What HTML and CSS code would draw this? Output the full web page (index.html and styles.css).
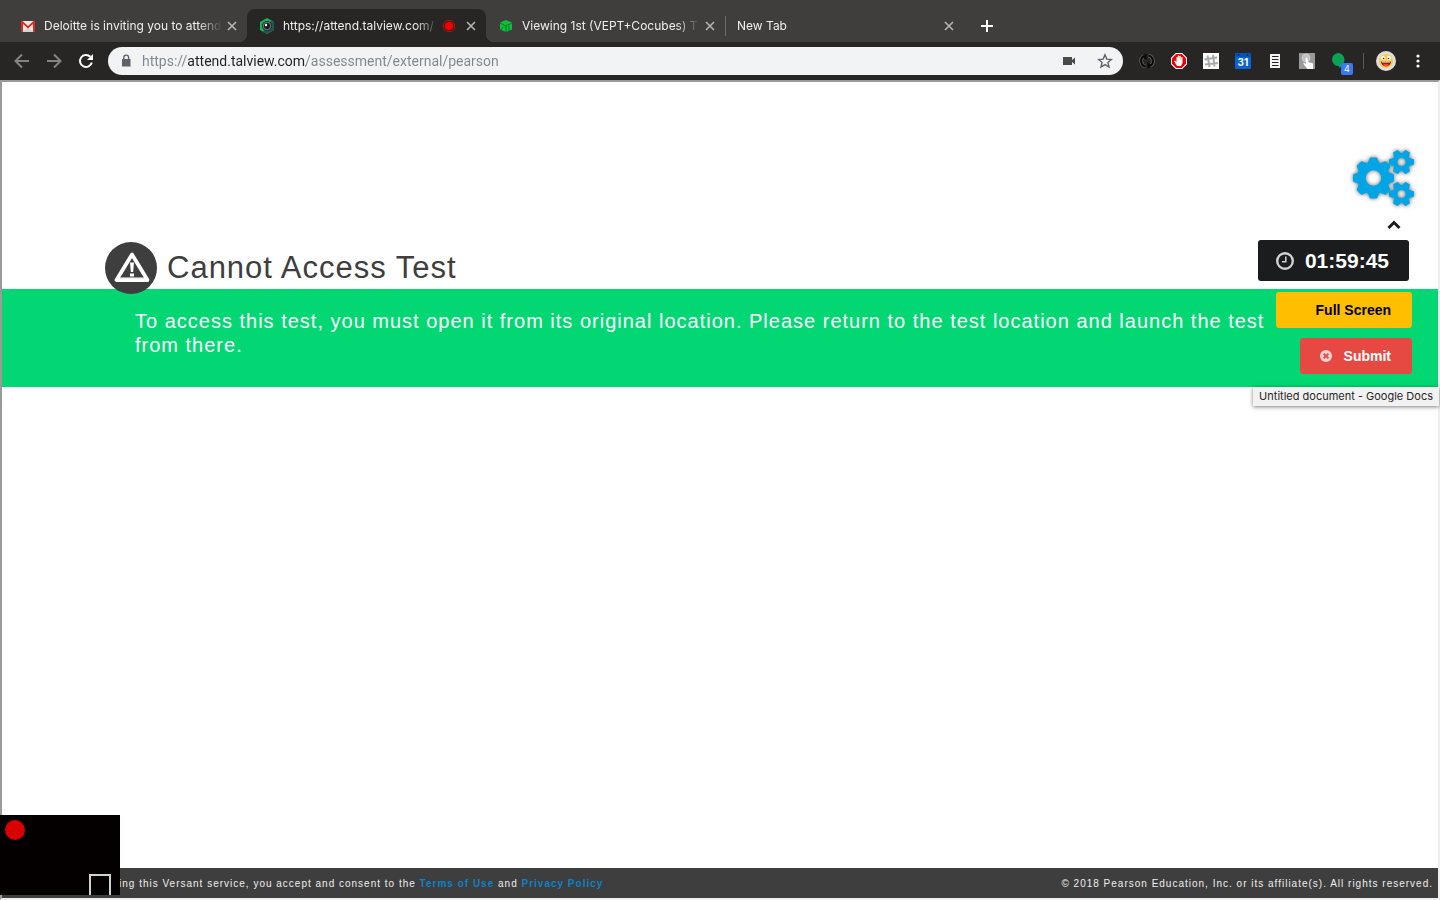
FILE: index.html
```html
<!DOCTYPE html>
<html lang="en">

<head>
    <meta charset="UTF-8">
    <meta name="viewport" content="width=device-width, initial-scale=1.0">
    <title>Cannot Access Test</title>
    <link rel="stylesheet" href="styles.css">
</head>

<body>
    <header class="browser">
        <!-- tabs -->
        <nav class="tabs">
            <div class="tab">
                <svg class="favicon" viewBox="0 0 16 16">
                    <path d="M1 3h14v11H1z" fill="#e8e8e8" />
                    <path d="M3 14l5-5 5 5z" fill="#d2d2d2" />
                    <path d="M1 14V3h1.500L8 8l5.500-5H15v11h-2V6l-5 4.500L3 6v8z" fill="#dd2c1e" />
                </svg>
                <span class="tab-title">Deloitte is inviting you to attend</span>
                <button class="close" aria-label="Close tab"><svg viewBox="0 0 16 16"><path d="M4 4l8 8M12 4l-8 8" /></svg></button>
            </div>
            <div class="tab active">
                <svg class="favicon" viewBox="0 0 16 16">
                    <path d="M8 0l7 4v8l-7 4-7-4V4z" fill="#16b45c" />
                    <path d="M15 4v8l-7 4-4-2 8-11z" fill="#235457" />
                    <circle cx="8" cy="8" r="5" fill="#16211f" />
                    <circle cx="8" cy="8" r="3.800" fill="none" stroke="#8b9a98" stroke-width=".8" />
                    <circle cx="7" cy="7" r="1.200" fill="#fff" />
                </svg>
                <span class="tab-title">https://attend.talview.com/</span>
                <svg class="recording" viewBox="0 0 16 16">
                    <circle cx="8" cy="8" r="5.700" fill="none" stroke="#e00" stroke-width=".8" />
                    <circle cx="8" cy="8" r="4.300" fill="#f00000" />
                </svg>
                <button class="close" aria-label="Close tab"><svg viewBox="0 0 16 16"><path d="M4 4l8 8M12 4l-8 8" /></svg></button>
            </div>
            <div class="tab">
                <svg class="favicon" viewBox="0 0 16 16">
                    <path d="M8 2l6 2.500v7L8 14l-6-2.500v-7z" fill="#0cc03c" />
                    <path d="M2 5l6 3v6M14 5L8 8M11 8.500v4M5 9l-2 3" fill="none" stroke="#0a6a28" stroke-width=".9" />
                </svg>
                <span class="tab-title">Viewing 1st (VEPT+Cocubes) T</span>
                <button class="close" aria-label="Close tab"><svg viewBox="0 0 16 16"><path d="M4 4l8 8M12 4l-8 8" /></svg></button>
            </div>
            <div class="tab divided">
                <span class="tab-title">New Tab</span>
                <button class="close" aria-label="Close tab"><svg viewBox="0 0 16 16"><path d="M4 4l8 8M12 4l-8 8" /></svg></button>
            </div>
            <button class="new-tab" aria-label="New tab"><svg viewBox="0 0 16 16"><path d="M8 2v12M2 8h12" /></svg></button>
        </nav>

        <!-- toolbar -->
        <div class="toolbar">
            <div class="nav-buttons">
                <button class="dim" aria-label="Back"><svg viewBox="0 0 16 16"><path d="M15 8H2M8 1.500L1.500 8 8 14.500" /></svg></button>
                <button class="dim" aria-label="Forward"><svg viewBox="0 0 16 16"><path d="M1 8h13M8 1.500L14.500 8 8 14.500" /></svg></button>
                <button aria-label="Reload"><svg viewBox="0 0 16 16"><path d="M13.800 9.500A6 6 0 1 1 12.300 3.800" /><path d="M15 1v6H9z" class="solid" /></svg></button>
            </div>
            <div class="omnibox">
                <svg class="lock" viewBox="0 0 16 16">
                    <path d="M4 6h8.500v7.500H4z" fill="#5f6368" />
                    <path d="M5.800 6.500V4.500a2.400 2.400 0 0 1 4.800 0v2" fill="none" stroke="#5f6368" stroke-width="1.400" />
                </svg>
                <input class="url" type="text" aria-label="Address" value="https://attend.talview.com/assessment/external/pearson">
                <button aria-label="Camera"><svg viewBox="0 0 16 16"><path d="M2 4h9v3l3-2.500v7L11 9v3H2z" fill="#4a4a4a" /></svg></button>
                <button aria-label="Bookmark"><svg viewBox="0 0 16 16"><path d="M8 1.800l1.800 4.300 4.600.4-3.500 3 1.100 4.600L8 11.600 4 14.100l1.100-4.600-3.500-3 4.600-.4z" fill="none" stroke="#5f6368" stroke-width="1.400" /></svg></button>
            </div>
            <div class="extensions">
                <svg viewBox="0 0 16 16">
                    <g fill="none" stroke="#6a6a6a" stroke-width="3.600"><path d="M6.500 13.500A5.700 5.700 0 0 1 5 3M9.500 2.500A5.700 5.700 0 0 1 11 13" /></g>
                    <g fill="none" stroke="#0a0a0a" stroke-width="2.200"><path d="M6.500 13.500A5.700 5.700 0 0 1 5 3M9.500 2.500A5.700 5.700 0 0 1 11 13M6.500 1v4L4 3M9.500 15v-4l2.500 2" /></g>
                </svg>
                <svg viewBox="0 0 16 16">
                    <path d="M4.800 0h6.400L16 4.800v6.400L11.200 16H4.800L0 11.200V4.800z" fill="#fff" />
                    <path d="M5.200 1h5.600L15 5.200v5.600L10.800 15H5.200L1 10.800V5.200z" fill="#f00000" />
                    <path d="M6 13l-3-5 1-.5 1.500 1.500V4h1.300v3V2.500h1.400V7l.3-4h1.300v4.500L10.500 4l1 .2V10l-1.500 3z" fill="#fff" />
                </svg>
                <svg viewBox="0 0 16 16">
                    <path d="M0 0h16v16H0z" fill="#fff" />
                    <path d="M4.500 2.500l2 11.500M10 2l1.500 11.500M1.500 6.500L14 4.500M2 11.500L15 10" fill="none" stroke="#aaa" stroke-width="2" />
                </svg>
                <svg viewBox="0 0 16 16">
                    <rect width="16" height="16" rx="1" fill="#0864d2" />
                    <path d="M0 0h16v4H0z" fill="#0554b5" />
                    <circle cx="3.500" cy="2" r="1" fill="#12305b" /><circle cx="12.500" cy="2" r="1" fill="#12305b" />
                    <text x="8" y="13" class="day">31</text>
                </svg>
                <svg viewBox="0 0 16 16">
                    <path d="M3 1h10v14H3z" fill="#f4f4f4" />
                    <path d="M5 3.500h6.500M5 6.500h6.500M5 9.500h6.500M5 12.500h6.500" stroke="#222" stroke-width="1.200" />
                </svg>
                <svg viewBox="0 0 16 16">
                    <path d="M0 0h16v16H0z" fill="#9a9a9a" />
                    <circle cx="7" cy="5" r="4" fill="#c2c2c2" stroke="#ddd" stroke-width=".6" />
                    <path d="M6.500 5q1-1 1.800 0l.7 4 5 1.500V16H8.500L4 10.500l1.500-.5L7 11z" fill="#fff" />
                </svg>
                <span class="hangouts">
                    <svg viewBox="0 0 16 16"><path d="M7 0a6.500 6.500 0 0 1 6.500 6.500C13.500 10 11 13.500 8 15v-2A6.500 6.500 0 1 1 7 0z" fill="#0aa255" /></svg>
                    <span class="count">4</span>
                </span>
            </div>
            <div class="profile">
                <svg class="avatar" viewBox="0 0 20 20">
                    <circle cx="10" cy="10" r="10" fill="#dedede" />
                    <circle cx="10" cy="10" r="7" fill="#f8cf3c" />
                    <circle cx="7" cy="7" r="2" fill="#fff" /><circle cx="13" cy="7" r="2" fill="#fff" />
                    <circle cx="7.500" cy="7.500" r=".8" fill="#333" /><circle cx="12.500" cy="7.500" r=".8" fill="#333" />
                    <path d="M5 10.500h10a5 5 0 0 1-10 0z" fill="#8c1a10" />
                    <path d="M6 10.500h8v1H6z" fill="#fff" />
                    <path d="M7 14q3-2.500 6 0-3 2.500-6 0z" fill="#f0483c" />
                </svg>
                <button class="menu" aria-label="Menu"><svg viewBox="0 0 16 16"><circle cx="8" cy="3" r="1.600" /><circle cx="8" cy="8" r="1.600" /><circle cx="8" cy="13" r="1.600" /></svg></button>
            </div>
        </div>
    </header>

    <div class="frame">
        <main>
            <div class="heading">
                <svg class="warning" viewBox="0 0 52 52">
                    <circle cx="26" cy="26" r="26" fill="#3e3e3e" />
                    <path d="M27 12.500L11.500 38h31z" fill="none" stroke="#fff" stroke-width="3.800" stroke-linejoin="round" />
                    <path d="M15 35.800h24" stroke="#ccc" stroke-width="1" />
                    <path d="M25 20.500h4l-.8 9.500h-2.400zM25 31.500h4v3h-4z" fill="#fff" />
                </svg>
                <h1>Cannot Access Test</h1>
            </div>
            <div class="message">
                <p>To access this test, you must open it from its original location. Please return to the test location and launch the test from there.</p>
            </div>
        </main>

        <footer>
            <p>By using this Versant service, you accept and consent to the <a href="#">Terms of Use</a> and <a href="#">Privacy Policy</a></p>
            <p>© 2018 Pearson Education, Inc. or its affiliate(s). All rights reserved.</p>
        </footer>

        <!-- floating test controls -->
        <aside class="controls">
            <svg class="gears" viewBox="0 0 70 66">
                <defs>
                    <path id="big-tooth" d="M-6-14l2-5.500q.3-1 1.500-1h5q1.200 0 1.500 1l2 5.500z" />
                    <path id="small-tooth" d="M-4-7.500l1-4q.3-1 1-1h4q.7 0 1 1l1 4z" />
                    <g id="small-gear">
                        <circle r="6.500" fill="none" stroke="#00a5e6" stroke-width="5" />
                        <use href="#small-tooth" transform="rotate(30)" /><use href="#small-tooth" transform="rotate(90)" />
                        <use href="#small-tooth" transform="rotate(150)" /><use href="#small-tooth" transform="rotate(210)" />
                        <use href="#small-tooth" transform="rotate(270)" /><use href="#small-tooth" transform="rotate(330)" />
                    </g>
                </defs>
                <g fill="#00a5e6">
                    <g transform="translate(25.500 34)">
                        <circle r="12" fill="none" stroke="#00a5e6" stroke-width="8.500" />
                        <use href="#big-tooth" /><use href="#big-tooth" transform="rotate(45)" />
                        <use href="#big-tooth" transform="rotate(90)" /><use href="#big-tooth" transform="rotate(135)" />
                        <use href="#big-tooth" transform="rotate(180)" /><use href="#big-tooth" transform="rotate(225)" />
                        <use href="#big-tooth" transform="rotate(270)" /><use href="#big-tooth" transform="rotate(315)" />
                    </g>
                    <use href="#small-gear" transform="translate(53.500 18)" />
                    <use href="#small-gear" transform="translate(53.500 50)" />
                </g>
            </svg>
            <button class="collapse" aria-label="Collapse"><svg viewBox="0 0 16 16"><path d="M2.500 11L8 5.500l5.500 5.500" /></svg></button>
            <div class="timer">
                <svg viewBox="0 0 20 20"><circle cx="10" cy="10" r="7.800" /><path d="M10.800 5.500v5.300H7" class="hands" /></svg>
                <time>01:59:45</time>
            </div>
            <button class="full-screen">Full Screen</button>
            <button class="submit">
                <svg viewBox="0 0 12 12"><circle cx="6" cy="6" r="6" /><path d="M3.600 3.600l4.800 4.800M8.400 3.600L3.600 8.400" /></svg>
                Submit
            </button>
        </aside>
        <div class="tooltip" role="tooltip">Untitled document - Google Docs</div>

        <!-- webcam preview -->
        <div class="webcam">
            <span class="rec-dot"></span>
            <span class="face-box"></span>
        </div>
    </div>
</body>

</html>
```
FILE: styles.css
```css
* {
    box-sizing: border-box;
}

body {
    margin: 0;
    min-height: 100vh;
    display: flex;
    flex-direction: column;
    font-family: "Liberation Sans", Arial, sans-serif;
    background-color: #fff;
}

button {
    padding: 0;
    border: 0;
    background: none;
    font-family: inherit;
}

svg {
    display: block;
    width: 16px;
    height: 16px;
    flex: none;
}

h1, p {
    margin: 0;
}

/* browser tabs */
.browser {
    font-family: Inter, "Liberation Sans", sans-serif;
    background-color: #272624;
}

.tabs {
    display: flex;
    align-items: flex-end;
    height: 42px;
    padding-left: 8px;
    background-color: #3f3e3c;
}

.tab {
    position: relative;
    display: flex;
    align-items: center;
    gap: 8px;
    flex: 0 1 239px;
    min-width: 0;
    height: 33px;
    padding: 0 7px 0 12px;
    border-radius: 8px 8px 0 0;
    color: #eee;
    font-size: 12px;
}

.tab.active {
    background-color: #272624;
}

.tab.active::before,
.tab.active::after {
    content: "";
    position: absolute;
    bottom: 0;
    width: 8px;
    height: 8px;
}

.tab.active::before {
    left: -8px;
    background: radial-gradient(circle at 0 0, transparent 8px, #272624 8px);
}

.tab.active::after {
    right: -8px;
    background: radial-gradient(circle at 100% 0, transparent 8px, #272624 8px);
}

.tab.divided::before {
    content: "";
    position: absolute;
    left: 0;
    top: 7px;
    width: 1px;
    height: 20px;
    background-color: #6c6b6a;
}

.tab-title {
    flex: 1;
    min-width: 0;
    margin-right: -6px;
    overflow: hidden;
    white-space: nowrap;
    mask-image: linear-gradient(to left, transparent, #000 24px);
}

.recording {
    margin-right: -2px;
}

.close svg {
    fill: none;
    stroke: #b5b5b4;
    stroke-width: 1.6;
}

.new-tab {
    margin: 0 15px 8px;
}

.new-tab svg {
    fill: none;
    stroke: #fff;
    stroke-width: 2;
}

/* toolbar */
.toolbar {
    display: flex;
    align-items: center;
    height: 38px;
    padding: 0 14px;
}

.nav-buttons {
    display: flex;
    gap: 16px;
    margin-right: 14px;
}

.nav-buttons svg {
    fill: none;
    stroke: #fff;
    stroke-width: 2;
}

.nav-buttons .dim svg {
    stroke: #858483;
}

.nav-buttons .solid {
    fill: #fff;
    stroke: none;
}

.omnibox {
    display: flex;
    align-items: center;
    flex: 1;
    min-width: 0;
    height: 28px;
    padding: 0 10px;
    border-radius: 14px;
    background-color: #f1f3f4;
}

.omnibox button {
    margin-left: 20px;
}

.url {
    flex: 1;
    min-width: 0;
    margin-left: 8px;
    padding: 0;
    border: 0;
    outline: 0;
    color: #202124;
    font-family: Roboto, sans-serif;
    font-size: 14px;
    /* host is darker than the scheme and the path */
    background: linear-gradient(to right, #80868b 46px, #202124 46px 164px, #80868b 164px);
    background-clip: text;
    -webkit-background-clip: text;
    -webkit-text-fill-color: transparent;
}

.extensions {
    display: flex;
    gap: 16px;
    margin-left: 16px;
}

.day {
    fill: #fff;
    font-size: 10px;
    font-weight: 700;
    text-anchor: middle;
}

.hangouts {
    position: relative;
}

.count {
    position: absolute;
    left: 10px;
    top: 10px;
    width: 12px;
    height: 12px;
    border-radius: 2px;
    background-color: #3b78f5;
    color: #fff;
    font-size: 9px;
    line-height: 12px;
    text-align: center;
}

.profile {
    display: flex;
    align-items: center;
    gap: 14px;
    height: 16px;
    margin-left: 16px;
    padding-left: 12px;
    border-left: 1px solid #5b5a59;
}

.avatar {
    width: 20px;
    height: 20px;
}

.menu svg {
    fill: #fff;
}

/* page */
.frame {
    position: relative;
    display: flex;
    flex-direction: column;
    flex: 1;
    border: 2px solid #eee;
    border-top-color: #9a9a9a;
    border-left-color: #9a9a9a;
}

main {
    flex: 1;
    padding-top: 160px;
}

.heading {
    position: relative;
    display: flex;
    align-items: center;
    gap: 10px;
    margin-bottom: -5px;
    padding-left: 103px;
}

.warning {
    width: 52px;
    height: 52px;
}

h1 {
    color: #3e3e3e;
    font-size: 31px;
    font-weight: 400;
    letter-spacing: 1px;
}

.message {
    padding: 20px 160px 30px 133px;
    background-color: #03d773;
    color: #fff;
    font-size: 20px;
    line-height: 24px;
    letter-spacing: 1px;
}

footer {
    display: flex;
    justify-content: space-between;
    align-items: center;
    height: 30px;
    padding: 0 5px 0 87px;
    background-color: #3e3e3e;
    color: #eee;
    font-size: 10px;
    letter-spacing: 1px;
}

footer a {
    color: #0c82c8;
    font-weight: 700;
    text-decoration: none;
}

/* test controls */
.controls {
    position: absolute;
    top: 62px;
    right: 26px;
    display: flex;
    flex-direction: column;
    align-items: flex-end;
}

.gears {
    width: 70px;
    height: 66px;
    margin-right: -6px;
    filter: drop-shadow(0 0 2px rgba(0, 0, 0, 0.6));
}

.collapse {
    margin: 7px 10px;
}

.collapse svg {
    fill: none;
    stroke: #1b1c1e;
    stroke-width: 3;
}

.timer {
    display: flex;
    align-items: center;
    gap: 10px;
    height: 41px;
    margin: 0 3px 11px 0;
    padding: 0 20px 0 17px;
    border-radius: 3px;
    background-color: #1b1c1e;
    color: #fff;
    font-size: 21px;
    font-weight: 700;
}

.timer svg {
    width: 20px;
    height: 20px;
    fill: none;
    stroke: #d1d2d2;
    stroke-width: 2.4;
}

.timer .hands {
    stroke-width: 1.5;
}

.full-screen,
.submit {
    display: flex;
    align-items: center;
    gap: 12px;
    height: 36px;
    border-radius: 3px;
    font-size: 14px;
    font-weight: 700;
}

.full-screen {
    margin-bottom: 10px;
    padding: 0 21px 0 40px;
    background-color: #ffbf00;
    color: #000;
}

.submit {
    padding: 0 21px 0 20px;
    background-color: #e64942;
    color: #fff;
}

.submit svg {
    width: 12px;
    height: 12px;
    fill: #f9d2d0;
    stroke: #e64942;
    stroke-width: 2;
}

.submit circle {
    stroke: none;
}

.tooltip {
    position: absolute;
    top: 305px;
    right: -1px;
    padding: 0 6px;
    background-color: #f2f2f2;
    box-shadow: 0 1px 4px rgba(0, 0, 0, 0.5);
    color: #262626;
    font-family: Inter, sans-serif;
    font-size: 11px;
    line-height: 19px;
}

/* webcam preview */
.webcam {
    position: absolute;
    left: -2px;
    bottom: 3px;
    width: 120px;
    height: 80px;
    overflow: hidden;
    background-color: #050000;
}

.rec-dot {
    position: absolute;
    left: 5px;
    top: 5px;
    width: 20px;
    height: 20px;
    border-radius: 50%;
    background-color: #d80000;
}

.face-box {
    position: absolute;
    right: 9px;
    bottom: -2px;
    width: 22px;
    height: 23px;
    border: 2px solid #d0d0d0;
}
```
